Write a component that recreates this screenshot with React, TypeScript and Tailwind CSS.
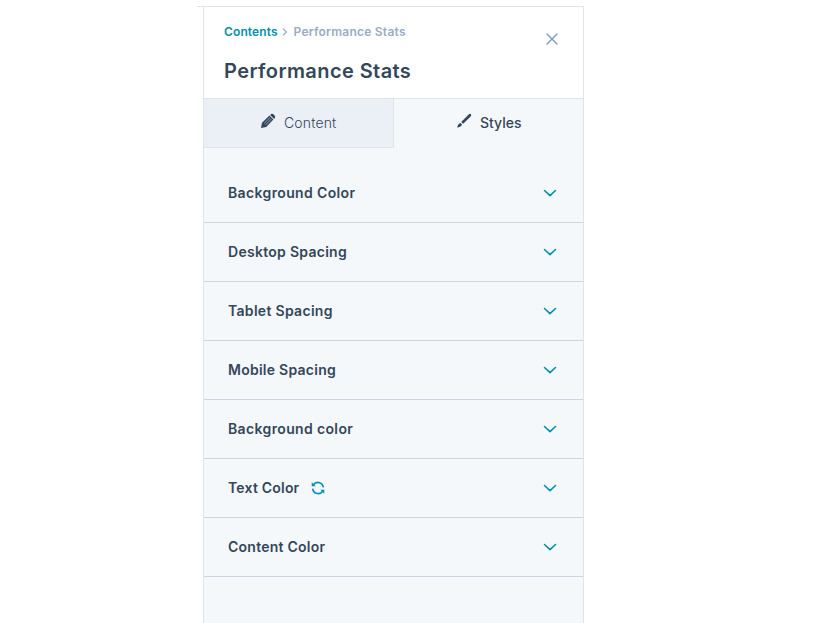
import { useState } from 'react'
import clsx from 'clsx'

interface StyleSection {
  label: string
  labelClass: string
  inherited?: boolean
}

const sections: StyleSection[] = [
  { label: 'Background Color', labelClass: 'tracking-[0.36px]' },
  { label: 'Desktop Spacing', labelClass: 'tracking-[0.28px]' },
  { label: 'Tablet Spacing', labelClass: 'tracking-[0.3px]' },
  { label: 'Mobile Spacing', labelClass: 'tracking-[0.25px]' },
  { label: 'Background color', labelClass: 'tracking-[0.36px]' },
  { label: 'Text Color', labelClass: 'tracking-[0.2px]', inherited: true },
  { label: 'Content Color', labelClass: 'tracking-[0.24px]' },
]

function CloseIcon() {
  return (
    <svg width="12" height="12" viewBox="0 0 12 12" fill="none" stroke="#7c98b6" strokeWidth="1.4" strokeLinecap="round">
      <path d="M1 1L11 11M11 1L1 11" />
    </svg>
  )
}

function ChevronDown() {
  return (
    <svg width="14" height="8" viewBox="0 0 14 8" fill="none" stroke="#0091ae" strokeWidth="1.6" strokeLinecap="round" strokeLinejoin="round">
      <path d="M1.5 1.5L7 6.7L12.5 1.5" />
    </svg>
  )
}

function PencilIcon() {
  return (
    <svg width="16" height="16" viewBox="0 0 16 16" fill="#33475b">
      <path d="M1 15L2 9.8L9.4 2.6L13.4 6.6L6.2 14Z" />
      <path d="M10.1 1.9L11.2 0.9Q12.4 0.3 13.5 1.3L14.6 2.4Q15.6 3.6 15 4.8L14.1 5.9Z" />
      <path d="M4.2 10.4L10.1 4.5M5.6 11.8L11.5 5.9" stroke="#a9b6c5" strokeWidth="0.8" />
    </svg>
  )
}

function BrushIcon() {
  return (
    <svg width="16" height="16" viewBox="0 0 16 16" fill="#33475b">
      <path d="M5.2 8.9L12.7 1.5Q14.1 0.4 15 1.2Q15.7 2.1 14.6 3.4L7.2 10.8Z" />
      <path d="M4.5 10.1L6 11.6Q5.2 14.3 1.2 14.6Q1.3 13.4 1.9 12.2Q2.8 10.4 4.5 10.1Z" />
    </svg>
  )
}

function RefreshIcon() {
  return (
    <svg width="14" height="14" viewBox="0 0 14 14" fill="none" stroke="#0091ae" strokeWidth="1.6">
      <path d="M2.6 3.6A5.4 5.4 0 0 1 12.3 6.4" />
      <path d="M11.4 10.4A5.4 5.4 0 0 1 1.7 7.6" />
      <path d="M0.7 1.2V5.2H4.7ZM13.3 12.8V8.8H9.3Z" fill="#0091ae" stroke="none" />
    </svg>
  )
}

export default function App() {
  const [tab, setTab] = useState<'content' | 'styles'>('styles')

  return (
    <div className="h-[623px] overflow-hidden bg-white pt-[6px] pl-[197px] font-['Inter',sans-serif] text-[#33475b]">
      <div className="h-full w-[387px] border-t border-[#dfe3eb] pl-[6px]">
        <div className="flex h-full flex-col border-x border-[#dfe3eb] bg-[#f5f8fa]">
          <header className="flex h-[92px] shrink-0 justify-between border-b border-[#dfe3eb] bg-white pr-[25px] pl-5">
            <div>
              <nav className="flex h-4 items-center mt-[17px] text-xs font-semibold leading-4">
                <a className="w-[54px] whitespace-nowrap tracking-[0.12px] text-[#0091ae]">Contents</a>
                <svg className="ml-1 mr-[5.5px]" width="6" height="8" viewBox="0 0 6 8" fill="none" stroke="#99acc2" strokeWidth="1.2">
                  <path d="M1 0.8L4.5 4L1 7.2" />
                </svg>
                <span className="whitespace-nowrap tracking-[0.24px] text-[#99acc2]">Performance Stats</span>
              </nav>
              <h1 className="mt-[17px] text-xl font-semibold leading-7 tracking-[0.41px]">Performance Stats</h1>
            </div>
            <button className="mt-[26px] h-3" aria-label="Close">
              <CloseIcon />
            </button>
          </header>

          {/* Tabs */}
          <div className="flex h-[49px] shrink-0 text-sm">
            <button
              className="flex w-[190px] items-center border-r border-b border-[#dfe3eb] bg-[#eaf0f6] pl-14 font-light"
              onClick={() => setTab('content')}
            >
              <span className="-mt-1"><PencilIcon /></span>
              <span className="ml-2 tracking-[0.15px]">Content</span>
            </button>
            <button
              className="flex flex-1 items-center pb-px pl-[62px] font-medium"
              aria-pressed={tab === 'styles'}
              onClick={() => setTab('styles')}
            >
              <span className="-mt-1"><BrushIcon /></span>
              <span className="ml-2">Styles</span>
            </button>
          </div>

          <div className="pt-4">
            {sections.map((section) => (
              <button
                key={section.label}
                className="flex h-[59px] w-full items-center border-b border-[#cbd6e2] pr-[26px] pl-6 text-sm font-semibold"
              >
                <span className={clsx('whitespace-nowrap', section.labelClass)}>{section.label}</span>
                {section.inherited && <span className="ml-3"><RefreshIcon /></span>}
                <span className="ml-auto"><ChevronDown /></span>
              </button>
            ))}
          </div>
        </div>
      </div>
    </div>
  )
}
